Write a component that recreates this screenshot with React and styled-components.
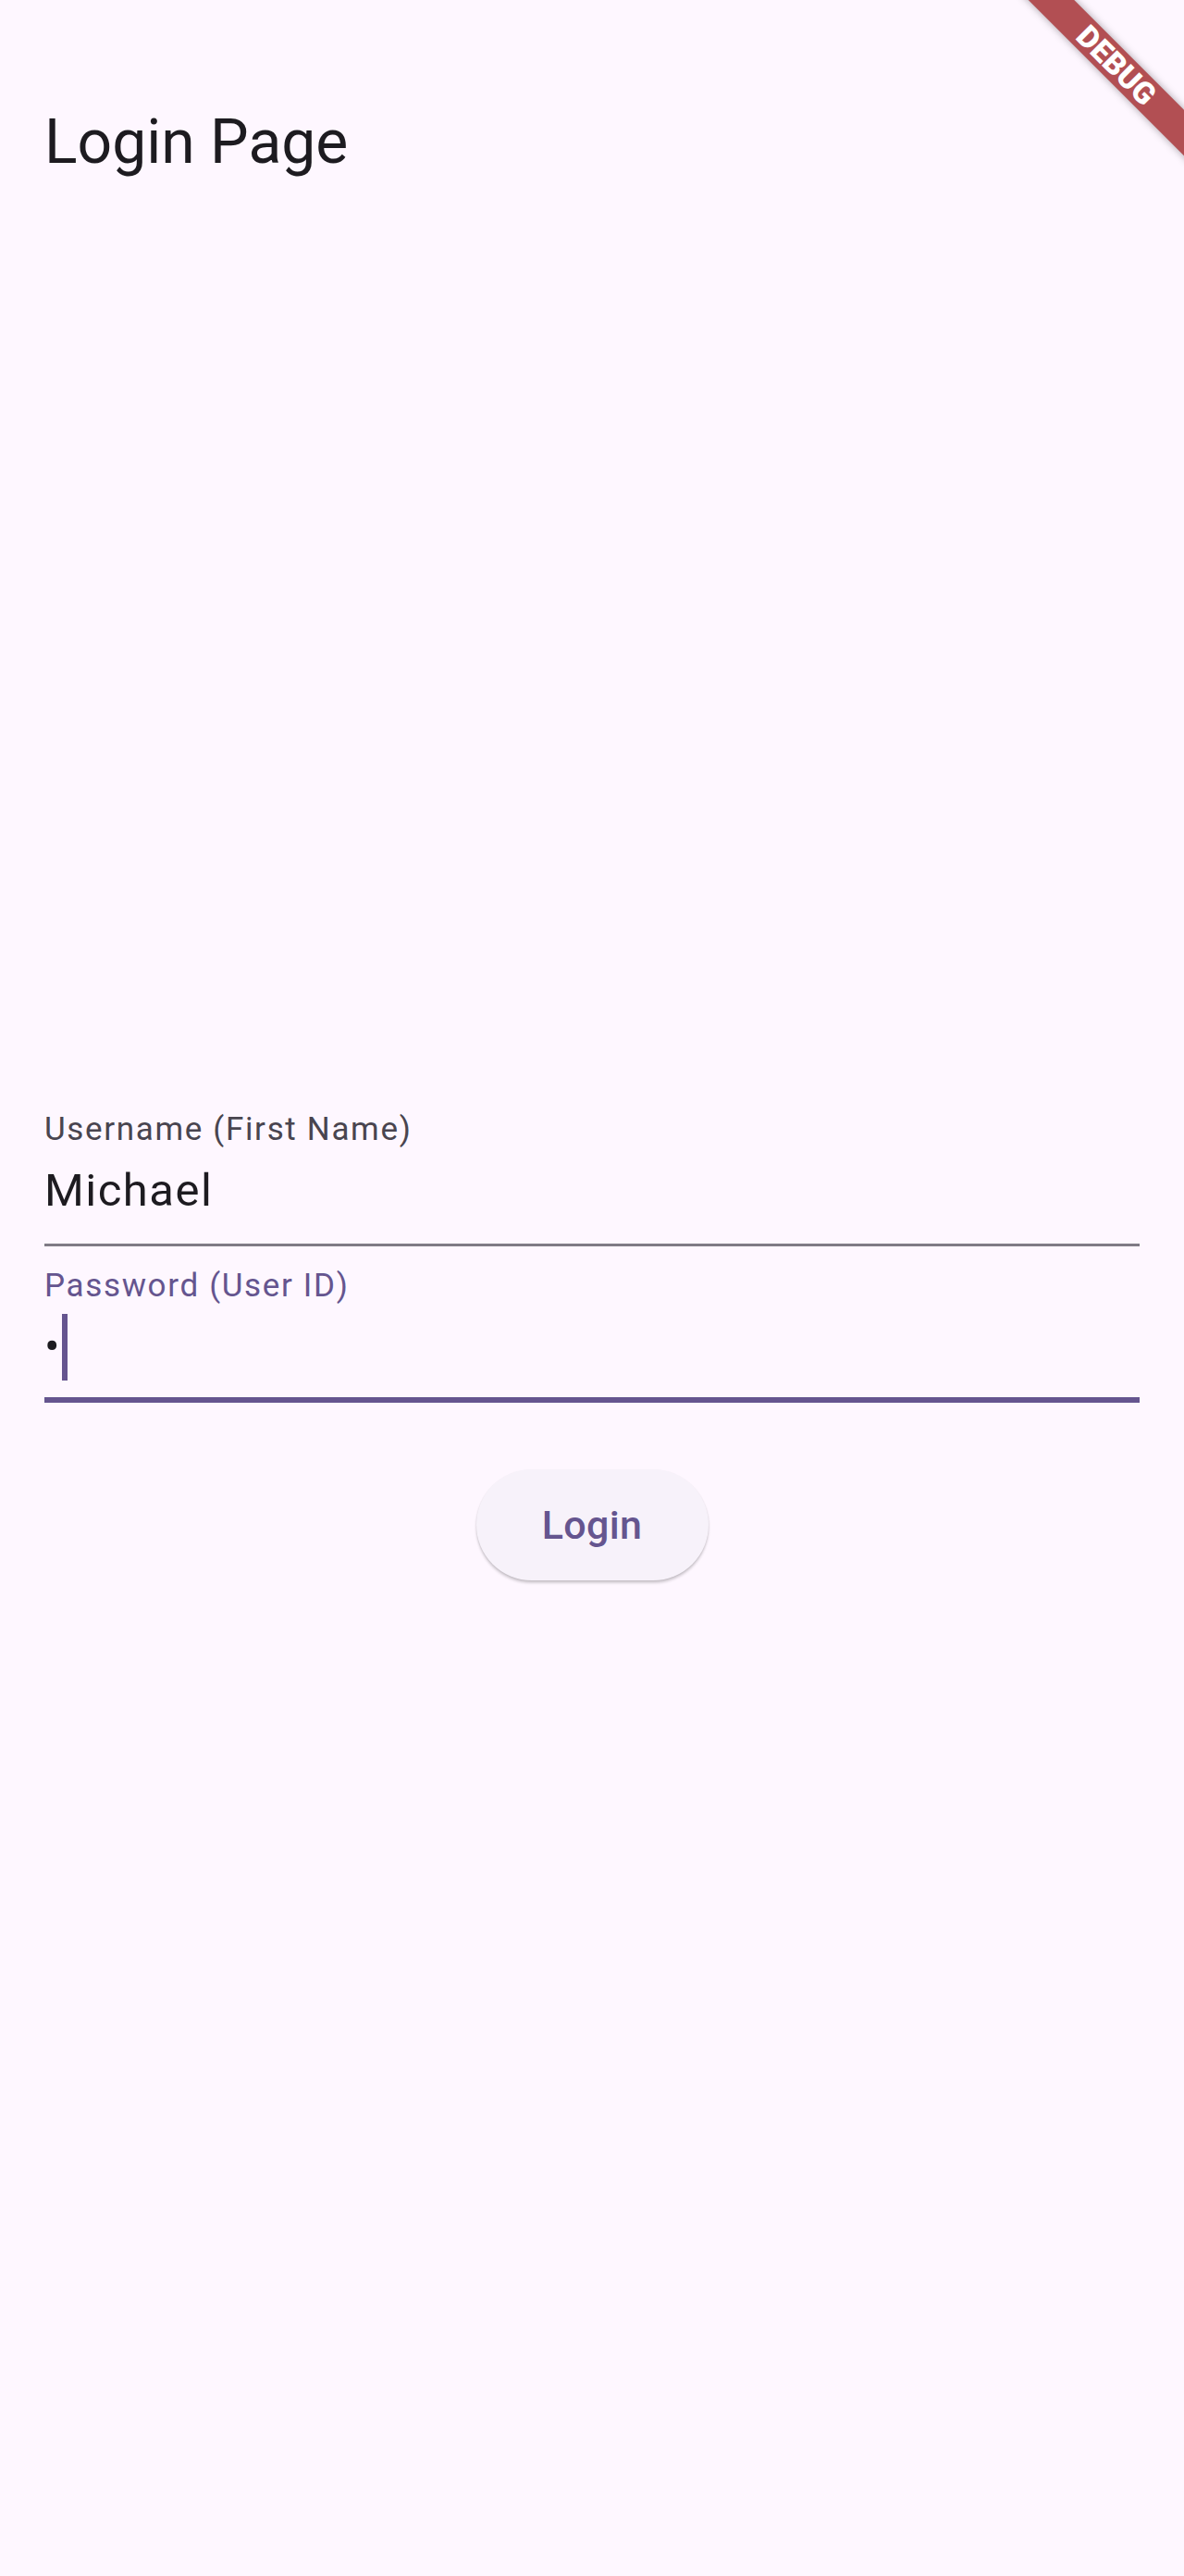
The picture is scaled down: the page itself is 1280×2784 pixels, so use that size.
import React from 'react';
import styled, { createGlobalStyle } from 'styled-components';

const GlobalStyle = createGlobalStyle`
  html, body {
    margin: 0;
    padding: 0;
    background: #FEF7FF;
    overflow: hidden;
  }
  * {
    box-sizing: border-box;
  }
`;

const Page = styled.div`
  position: relative;
  min-height: 2784px;
  background: #FEF7FF;
  font-family: Roboto, "Noto Sans", sans-serif;
  display: flex;
  flex-direction: column;
`;

const AppBar = styled.header`
  padding: 121px 48px 0;
`;

const Title = styled.h1`
  margin: 0;
  font-size: 66px;
  line-height: 66px;
  font-weight: 400;
  color: #1D1B20;
`;

const Form = styled.main`
  display: flex;
  flex-direction: column;
  padding: 0 48px;
  margin-top: 1016px;
`;

const Field = styled.div`
  display: flex;
  flex-direction: column;
  margin-top: ${p => p.$first ? '0' : '25px'};
`;

const FieldLabel = styled.label`
  font-size: 35px;
  line-height: 35px;
  letter-spacing: 1.65px;
  color: ${p => p.$focused ? '#65558F' : '#49454F'};
`;

const InputRow = styled.div`
  display: flex;
  align-items: stretch;
  padding: 13px 0 18px;
`;

const InputText = styled.span`
  font-size: 49px;
  line-height: 72px;
  height: 72px;
  letter-spacing: 1.5px;
  color: #1D1B20;
`;

const Cursor = styled.span`
  width: 6px;
  height: 72px;
  margin-left: 1px;
  background: #65558F;
`;

const Underline = styled.div`
  height: 6px;
  border-bottom: ${p => p.$focused ? '6px solid #65558F' : '3px solid #807B85'};
`;

const ButtonRow = styled.div`
  display: flex;
  justify-content: center;
  margin-top: 72px;
`;

const LoginButton = styled.button`
  width: 251px;
  height: 120px;
  border: none;
  border-radius: 60px;
  background: #F7F2FA;
  color: #65558F;
  font-family: Roboto, "Noto Sans", sans-serif;
  font-size: 43px;
  font-weight: 500;
  letter-spacing: 0.3px;
  box-shadow: 0 3px 3px rgba(0, 0, 0, 0.16), 0 1px 2px rgba(0, 0, 0, 0.1);
  cursor: pointer;
`;

const BannerClip = styled.div`
  position: absolute;
  top: 0;
  right: 0;
  width: 200px;
  height: 200px;
  overflow: hidden;
  pointer-events: none;
`;

const Ribbon = styled.div`
  position: absolute;
  left: -23px;
  top: 53px;
  width: 300px;
  height: 35px;
  transform: rotate(45deg);
  background: #B24F53;
  box-shadow: 0 0 8px rgba(0, 0, 0, 0.35);
  color: #fff;
  font-family: Roboto, "Noto Sans", sans-serif;
  font-size: 33px;
  font-weight: 900;
  line-height: 35px;
  text-align: center;
`;

export default function App() {
  return (
    <Page>
      <GlobalStyle />
      <AppBar>
        <Title>Login Page</Title>
      </AppBar>
      <Form>
        <Field $first>
          <FieldLabel>Username (First Name)</FieldLabel>
          <InputRow>
            <InputText>Michael</InputText>
          </InputRow>
          <Underline />
        </Field>
        <Field>
          <FieldLabel $focused>Password (User ID)</FieldLabel>
          <InputRow>
            <InputText>•</InputText>
            <Cursor />
          </InputRow>
          <Underline $focused />
        </Field>
        <ButtonRow>
          <LoginButton>Login</LoginButton>
        </ButtonRow>
      </Form>
      <BannerClip>
        <Ribbon>DEBUG</Ribbon>
      </BannerClip>
    </Page>
  );
}
